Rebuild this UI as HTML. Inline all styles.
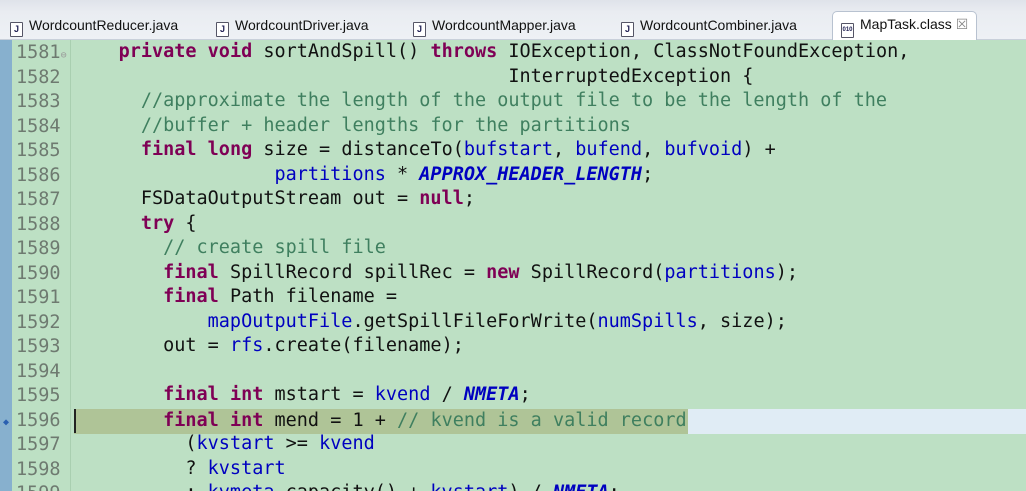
<!DOCTYPE html>
<html><head><meta charset="utf-8"><style>
html,body{margin:0;width:1026px;height:491px;overflow:hidden}
body{background:#bde0c4;position:relative;font-family:"DejaVu Sans Mono","Liberation Mono",monospace}
#tabs{position:absolute;left:0;top:0;width:1026px;height:39px;background:linear-gradient(#dfe3ea,#e9ecf1 30%,#eef1f5);border-bottom:1px solid #c9d0da}
.tab{position:absolute;top:13px;height:25px;font:14px "Liberation Sans",sans-serif;color:#111;line-height:25px;white-space:nowrap}
.ic{display:inline-block;width:11px;height:13px;border:1px solid #556;border-radius:1px;background:#fff;vertical-align:-2px;margin-right:6px;font:bold 9px "Liberation Sans";text-align:center;line-height:13px;color:#225}
.active{background:#fff;border:1px solid #b8c2d0;border-bottom:none;border-radius:5px 5px 0 0;top:11px;height:28px;padding:0 8px}
#gut{position:absolute;left:0;top:40px;width:12px;height:451px;background:#6a96d4;opacity:.65}
#gutsep{position:absolute;left:70px;top:40px;width:1px;height:451px;background:#a9cfb0}
.ln{position:absolute;left:16px;width:54px;color:#6e7a70;font-size:18.5px;line-height:24.5px;height:24.5px}
.l{position:absolute;left:74px;white-space:pre;font-size:18.5px;line-height:24.5px;height:24.5px;color:#111}
.k{color:#7f0055;font-weight:bold}.f{color:#0000c0}.c{color:#3f7f5f}.C{color:#0000c0;font-weight:bold;font-style:italic}
</style></head><body>
<div id="tabs">
<div class="tab" style="left:10px"><span class="ic">J</span>WordcountReducer.java</div>
<div class="tab" style="left:216px"><span class="ic">J</span>WordcountDriver.java</div>
<div class="tab" style="left:413px"><span class="ic">J</span>WordcountMapper.java</div>
<div class="tab" style="left:621px"><span class="ic">J</span>WordcountCombiner.java</div>
<div class="tab active" style="left:832px"><span class="ic" style="font-size:6px">010</span>MapTask.class <span style="color:#888">☒</span></div>
</div>
<div id="gut"></div><div id="gutsep"></div>
<div style="position:absolute;left:74px;top:409px;width:614px;height:24.5px;background:#afc497"></div>
<div style="position:absolute;left:688px;top:409px;width:338px;height:24.5px;background:#e0ecf5"></div>
<div style="position:absolute;left:74px;top:409px;width:2px;height:24px;background:#222"></div>
<div style="position:absolute;left:3px;top:417px;color:#2a5fb0;font-size:10px">◆</div>
<div class="ln" style="top:41px">1581<span style="font-size:10px;color:#999">⊖</span></div>
<div class="ln" style="top:65.5px">1582</div>
<div class="ln" style="top:90px">1583</div>
<div class="ln" style="top:114.5px">1584</div>
<div class="ln" style="top:139px">1585</div>
<div class="ln" style="top:163.5px">1586</div>
<div class="ln" style="top:188px">1587</div>
<div class="ln" style="top:212.5px">1588</div>
<div class="ln" style="top:237px">1589</div>
<div class="ln" style="top:261.5px">1590</div>
<div class="ln" style="top:286px">1591</div>
<div class="ln" style="top:310.5px">1592</div>
<div class="ln" style="top:335px">1593</div>
<div class="ln" style="top:359.5px">1594</div>
<div class="ln" style="top:384px">1595</div>
<div class="ln" style="top:408.5px">1596</div>
<div class="ln" style="top:433px">1597</div>
<div class="ln" style="top:457.5px">1598</div>
<div class="ln" style="top:482px">1599</div>
<div class="l" style="top:40px">    <span class="k">private</span> <span class="k">void</span> sortAndSpill() <span class="k">throws</span> IOException, ClassNotFoundException,</div>
<div class="l" style="top:64.5px">                                       InterruptedException {</div>
<div class="l" style="top:89px">      <span class="c">//approximate the length of the output file to be the length of the</span></div>
<div class="l" style="top:113.5px">      <span class="c">//buffer + header lengths for the partitions</span></div>
<div class="l" style="top:138px">      <span class="k">final</span> <span class="k">long</span> size = distanceTo(<span class="f">bufstart</span>, <span class="f">bufend</span>, <span class="f">bufvoid</span>) +</div>
<div class="l" style="top:162.5px">                  <span class="f">partitions</span> * <span class="C">APPROX_HEADER_LENGTH</span>;</div>
<div class="l" style="top:187px">      FSDataOutputStream out = <span class="k">null</span>;</div>
<div class="l" style="top:211.5px">      <span class="k">try</span> {</div>
<div class="l" style="top:236px">        <span class="c">// create spill file</span></div>
<div class="l" style="top:260.5px">        <span class="k">final</span> SpillRecord spillRec = <span class="k">new</span> SpillRecord(<span class="f">partitions</span>);</div>
<div class="l" style="top:285px">        <span class="k">final</span> Path filename =</div>
<div class="l" style="top:309.5px">            <span class="f">mapOutputFile</span>.getSpillFileForWrite(<span class="f">numSpills</span>, size);</div>
<div class="l" style="top:334px">        out = <span class="f">rfs</span>.create(filename);</div>
<div class="l" style="top:383px">        <span class="k">final</span> <span class="k">int</span> mstart = <span class="f">kvend</span> / <span class="C">NMETA</span>;</div>
<div class="l" style="top:408.5px">        <span class="k">final</span> <span class="k">int</span> mend = 1 + <span class="c">// kvend is a valid record</span></div>
<div class="l" style="top:432px">          (<span class="f">kvstart</span> &gt;= <span class="f">kvend</span></div>
<div class="l" style="top:456.5px">          ? <span class="f">kvstart</span></div>
<div class="l" style="top:481px">          : <span class="f">kvmeta</span>.capacity() + <span class="f">kvstart</span>) / <span class="C">NMETA</span>;</div>
</body></html>
